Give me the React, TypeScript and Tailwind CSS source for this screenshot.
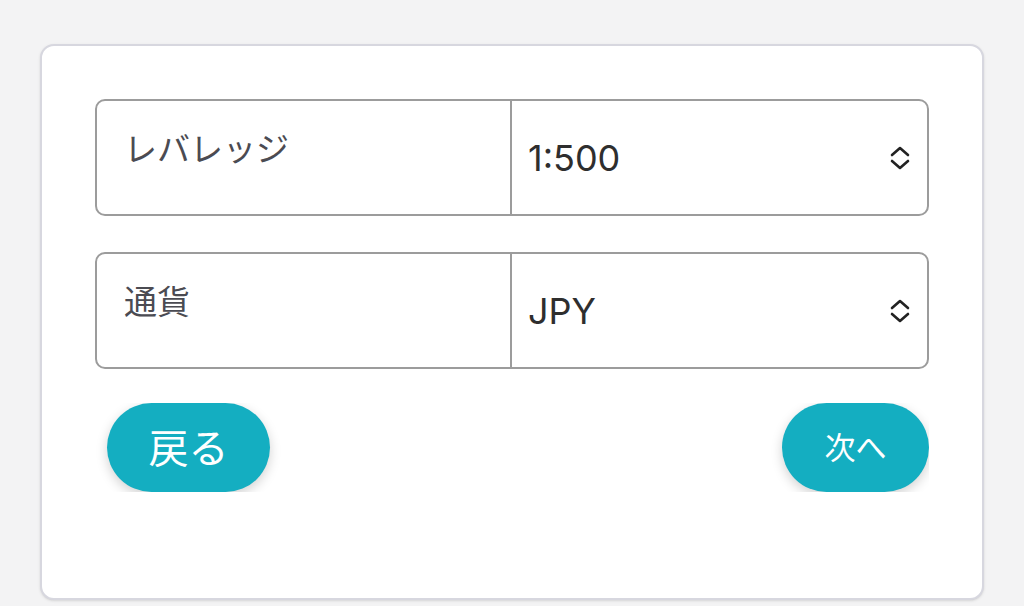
import React from 'react'

const font = { fontFamily: '"Noto Sans", "Noto Sans CJK JP", sans-serif' }

function UpDown() {
  return (
    <svg width="24" height="26" viewBox="0 0 24 26" fill="none" stroke="#222" strokeWidth="2.6" strokeLinecap="round" strokeLinejoin="round">
      <path d="M4 10 L12 3 L20 10" />
      <path d="M4 16 L12 23 L20 16" />
    </svg>
  )
}

function Row({ label, value }: { label: string; value: string }) {
  return (
    <div className="flex h-[117px] rounded-[10px] border-2 border-[#9c9c9c] bg-white">
      <div className="w-[415px] shrink-0 border-r-2 border-[#9c9c9c] pl-[27px] pt-[26px] text-[33px] leading-[44px] text-[#4b4b52]">
        {label}
      </div>
      <div className="flex flex-1 items-center justify-between pl-[16px] pr-[15px]">
        <span className="text-[36px] text-[#2e2e2e]" style={{ fontFamily: 'Inter, "Noto Sans", sans-serif' }}>
          {value}
        </span>
        <UpDown />
      </div>
    </div>
  )
}

export default function App() {
  return (
    <div className="min-h-[606px] w-full bg-[#f3f3f4] px-[40px] pt-[44px]" style={font}>
      <div className="h-[556px] rounded-[14px] border-2 border-[#d7d7df] bg-white px-[53px] pt-[53px] shadow-sm">
        <div className="flex flex-col gap-[36px]">
          <Row label="レバレッジ" value="1:500" />
          <Row label="通貨" value="JPY" />
        </div>
        <div className="mt-[34px] flex h-[89px] items-start justify-between overflow-hidden">
          <button className="ml-[12px] h-[89px] w-[163px] rounded-full bg-[#14aec1] text-[40px] text-white shadow-[0_4px_12px_rgba(0,0,0,0.18)]">
            戻る
          </button>
          <button className="h-[89px] w-[147px] rounded-full bg-[#14aec1] text-[31px] text-white shadow-[0_4px_12px_rgba(0,0,0,0.18)]">
            次へ
          </button>
        </div>
      </div>
    </div>
  )
}
